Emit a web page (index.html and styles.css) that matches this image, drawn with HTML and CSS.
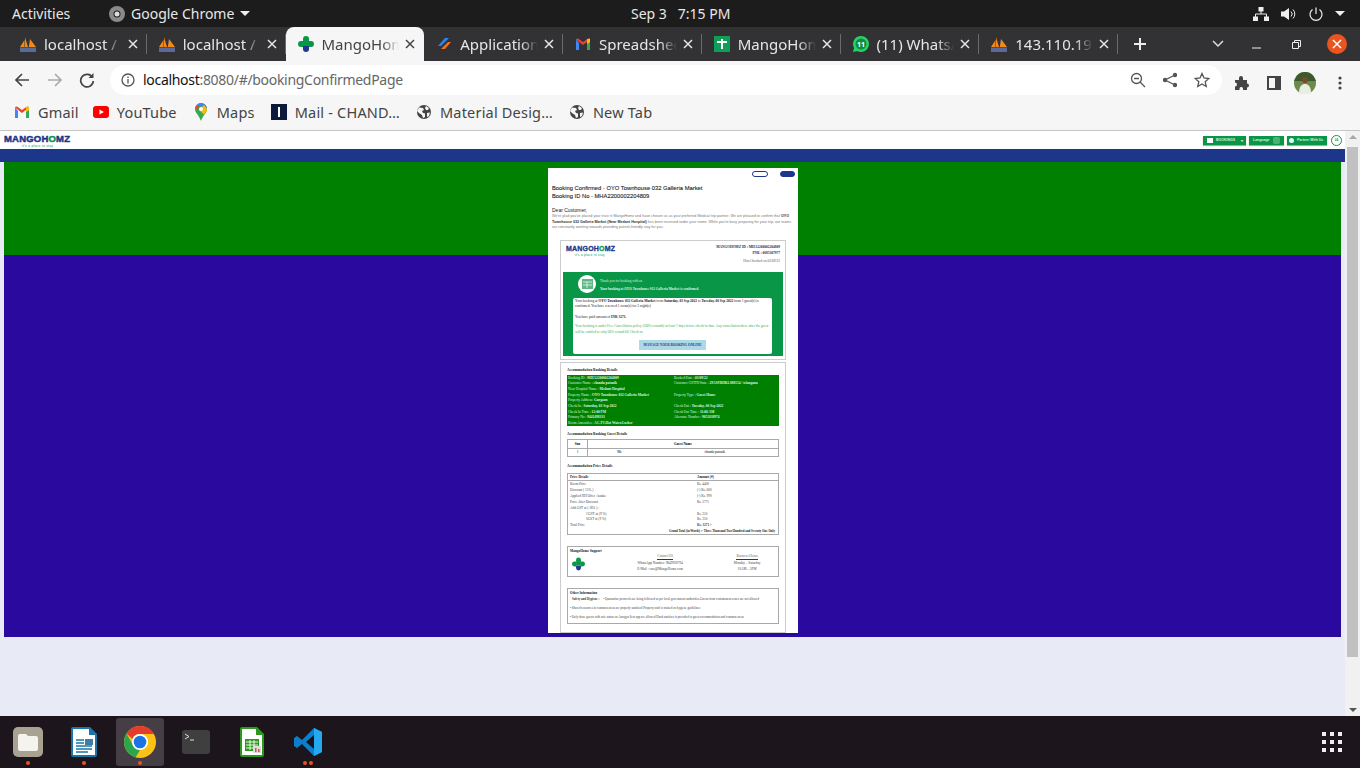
FILE: index.html
```html
<html>
  <head>
    <meta charset="utf-8" />
    <title>MangoHomz</title>
    <link rel="stylesheet" href="styles.css">
  </head>
  <body>
    <svg class="defs" width="0" height="0">
      <symbol id="pma" viewBox="0 0 16 16">
        <path d="M0 11 4.500 4v7zM5 11V1l3 10zM8.800 11 10 3l6 8z" fill="#f08a1d"/>
        <path d="M0 11.500h16V16H0z" fill="#5a6a9a"/>
      </symbol>
      <symbol id="plus" viewBox="0 0 16 16">
        <path d="M5 5V3a3 3 0 0 1 6 0v2z" fill="#0a9647"/>
        <path d="M5 5H3a3 3 0 0 0 0 6h2zM11 5h2a3 3 0 0 1 0 6h-2z" fill="#0a9647"/>
        <path d="M5 4.500h6V10H5z" fill="#0a9647"/>
        <path d="M5 10h6v3a3 3 0 0 1-6 0z" fill="#1e3a8a"/>
      </symbol>
      <symbol id="gmail" viewBox="0 0 16 16">
        <path d="M1 3.500V14h3V7z" fill="#4285f4"/>
        <path d="M15 3.500V14h-3V7z" fill="#34a853"/>
        <path d="M1 3.500 8 9l7-5.500V3l-2-.500L8 6 3 2.500 1 3z" fill="#ea4335"/>
        <path d="M12 3.300 15 2.500V6l-3 2.300z" fill="#fbbc04"/>
      </symbol>
      <symbol id="globe" viewBox="0 0 16 16">
        <circle cx="8" cy="8" r="7" fill="#444"/>
        <path d="M3 3.500 7 4l1 2-2 1 1 2 2 .500V13l-2 1-1-3-3-2-2-2zM10 2l3 2-1 2h-2l-1-2zM11 9l3-.500-1 3.500-2 1z" fill="#f6f6f6"/>
      </symbol>
      <symbol id="close" viewBox="0 0 10 10">
        <path d="M1 1l8 8M9 1 1 9" stroke="currentColor" stroke-width="1.500" fill="none"/>
      </symbol>
    </svg>

    <div class="topbar">
      <span class="activities">Activities</span>
      <span class="app-menu">
        <svg class="chrome-mono" width="16" height="16" viewBox="0 0 16 16"><circle cx="8" cy="8" r="8" fill="#8a8a8a"/><circle cx="8" cy="8" r="3.500" fill="#1b1b1b"/><circle cx="8" cy="8" r="2.500" fill="#ddd"/></svg>
        Google Chrome
        <i class="caret"></i>
      </span>
      <span class="clock">Sep 3 &nbsp; 7:15 PM</span>
      <span class="tray">
        <svg width="16" height="14" viewBox="0 0 16 14" fill="#eee"><path d="M5.500 0h5v4.500h-5zM0 9.500h5V14H0zM11 9.500h5V14h-5z"/><path d="M8 4v3M2.500 10V7h11v3" stroke="#eee" fill="none"/></svg>
        <svg width="16" height="14" viewBox="0 0 16 14" fill="#eee"><path d="M0 4.500h3L8 1v12L3 9.500H0z"/><path d="M10 4.500a3.500 3.500 0 0 1 0 5M12 2.500a6.500 6.500 0 0 1 0 9" stroke="#eee" fill="none"/></svg>
        <svg width="14" height="14" viewBox="0 0 14 14" fill="none" stroke="#eee" stroke-width="1.200"><path d="M7 .5v6.500M3.500 2.500a6 6 0 1 0 7 0"/></svg>
        <i class="caret"></i>
      </span>
    </div>

    <div class="tabstrip">
      <div class="tab"><svg class="fav"><use href="#pma"/></svg><span class="tab-title">localhost / 127.0.0.1</span><svg class="tab-x"><use href="#close"/></svg></div>
      <div class="tab"><svg class="fav"><use href="#pma"/></svg><span class="tab-title">localhost / 127.0.0.1</span><svg class="tab-x"><use href="#close"/></svg></div>
      <div class="tab tab-active"><svg class="fav"><use href="#plus"/></svg><span class="tab-title">MangoHomz</span><svg class="tab-x"><use href="#close"/></svg></div>
      <div class="tab"><svg class="fav" viewBox="0 0 16 16"><path d="M9 2h4L5 10H2z" fill="#2684ff"/><path d="M12 6h3l-6 7H5z" fill="#f2711c"/></svg><span class="tab-title">Application Form</span><svg class="tab-x"><use href="#close"/></svg></div>
      <div class="tab"><svg class="fav"><use href="#gmail"/></svg><span class="tab-title">Spreadsheet</span><svg class="tab-x"><use href="#close"/></svg></div>
      <div class="tab"><svg class="fav" viewBox="0 0 16 16"><path d="M0 0h16v16H0z" fill="#0f9d58"/><path d="M3 6h10M8 3v10" stroke="#fff" stroke-width="2"/></svg><span class="tab-title">MangoHomz</span><svg class="tab-x"><use href="#close"/></svg></div>
      <div class="tab"><svg class="fav" viewBox="0 0 16 16"><path d="M8 0a8 8 0 0 1 0 16 8 8 0 0 1-3.800-1L0 16l1.100-4A8 8 0 0 1 8 0z" fill="#25d366"/><circle cx="8" cy="8" r="5.500" fill="#128c3e"/><text x="8" y="10.500" class="fav-count">11</text></svg><span class="tab-title">(11) WhatsApp</span><svg class="tab-x"><use href="#close"/></svg></div>
      <div class="tab tab-last"><svg class="fav"><use href="#pma"/></svg><span class="tab-title">143.110.190.11</span><svg class="tab-x"><use href="#close"/></svg></div>
      <svg class="new-tab" width="14" height="14" viewBox="0 0 14 14"><path d="M7 1v12M1 7h12" stroke="#eee" stroke-width="2"/></svg>
      <span class="win-controls">
        <svg width="12" height="8" viewBox="0 0 12 8" fill="none" stroke="#ddd" stroke-width="1.500"><path d="M1 1l5 5 5-5"/></svg>
        <svg class="win-min" width="9" height="9" viewBox="0 0 9 9"><path d="M0 8h9" stroke="#eee"/></svg>
        <svg class="win-max" width="9" height="9" viewBox="0 0 9 9" fill="none" stroke="#eee"><path d="M.5 2.500h6v6h-6zM2.500 2.500v-2h6v6h-2"/></svg>
        <span class="win-close"><svg width="10" height="10" color="#fff"><use href="#close"/></svg></span>
      </span>
    </div>

    <div class="toolbar">
      <svg class="nav-icon" width="16" height="16" viewBox="0 0 16 16" fill="none" stroke="#444" stroke-width="1.700"><path d="M15 8H2M8 2 2 8l6 6"/></svg>
      <svg class="nav-icon" width="16" height="16" viewBox="0 0 16 16" fill="none" stroke="#aaa" stroke-width="1.700"><path d="M1 8h13M8 2l6 6-6 6"/></svg>
      <svg class="nav-icon nav-reload" width="16" height="16" viewBox="0 0 16 16" fill="none" stroke="#444" stroke-width="1.700"><path d="M13.500 5.500A6.300 6.300 0 1 0 14.300 9"/><path d="M14.500 1v5h-5" fill="#444" stroke="none"/></svg>
      <div class="omnibox">
        <svg width="14" height="14" viewBox="0 0 14 14" fill="none" stroke="#555" stroke-width="1.300"><circle cx="7" cy="7" r="6"/><path d="M7 6v4.500M7 3.500v1.500"/></svg>
        <span class="url"><b>localhost</b>:8080/#/bookingConfirmedPage</span>
        <span class="omni-right">
          <svg width="16" height="16" viewBox="0 0 16 16" fill="none" stroke="#555" stroke-width="1.300"><circle cx="6.500" cy="6.500" r="5"/><path d="M4 6.500h5M10 10l5 5"/></svg>
          <svg width="16" height="16" viewBox="0 0 16 16" fill="#555"><circle cx="13" cy="3" r="2.200"/><circle cx="3" cy="8" r="2.200"/><circle cx="13" cy="13" r="2.200"/><path d="M13 3 3 8l10 5" fill="none" stroke="#555" stroke-width="1.300"/></svg>
          <svg width="16" height="16" viewBox="0 0 16 16" fill="none" stroke="#555" stroke-width="1.300"><path d="M8 1.500l2 4.500 4.800.5-3.600 3.200 1 4.800L8 12l-4.200 2.500 1-4.800L1.200 6.500 6 6z"/></svg>
        </span>
      </div>
      <span class="tool-right">
        <svg width="16" height="16" viewBox="0 0 16 16" fill="#444"><path d="M1 5h4V3a2 2 0 0 1 4 0v2h4v3.500a2 2 0 0 1 0 4V15H9v-1.500a1.800 1.800 0 0 0-3.500 0V15H1v-3.500a2 2 0 0 0 0-4z"/></svg>
        <svg class="tool-panel" width="14" height="14" viewBox="0 0 14 14"><path d="M0 0h14v14H0z" fill="#444"/><path d="M2 2h6v10H2z" fill="#f6f6f6"/></svg>
        <svg class="avatar" width="22" height="22" viewBox="0 0 22 22"><circle cx="11" cy="11" r="11" fill="#6d8a4a"/><path d="M3 3.500a11 11 0 0 1 16 0L22 9H0z" fill="#3d5a2e"/><circle cx="11" cy="8" r="3" fill="#7a4a2e"/><path d="M5 21c0-7 3-9 6-9s6 2 6 9a11 11 0 0 1-12 0z" fill="#e8eee0"/></svg>
        <svg class="tool-menu" width="4" height="14" viewBox="0 0 4 14" fill="#444"><circle cx="2" cy="2" r="1.600"/><circle cx="2" cy="7" r="1.600"/><circle cx="2" cy="12" r="1.600"/></svg>
      </span>
    </div>

    <div class="bookmarks">
      <span class="bm"><svg width="16" height="16"><use href="#gmail"/></svg>Gmail</span>
      <span class="bm"><svg width="16" height="16" viewBox="0 0 16 16"><rect y="2" width="16" height="12" rx="3" fill="#f00"/><path d="M6.500 5.500v5L11 8z" fill="#fff"/></svg>YouTube</span>
      <span class="bm"><svg width="16" height="18" viewBox="0 0 16 18"><path d="M8 0a6 6 0 0 1 6 6c0 4-4 6-6 12C6 12 2 10 2 6a6 6 0 0 1 6-6z" fill="#34a853"/><path d="M8 0a6 6 0 0 1 6 6L4 2a6 6 0 0 1 4-2z" fill="#4285f4"/><path d="M14 6c0 2-1.500 3.500-3 5.500L6 7l5-5z" fill="#fbbc04"/><path d="M2 6a6 6 0 0 1 2-4l3 3z" fill="#ea4335"/><circle cx="8" cy="6" r="2" fill="#fff"/></svg>Maps</span>
      <span class="bm"><svg width="16" height="16" viewBox="0 0 16 16"><path d="M0 0h16v16H0z" fill="#0b1a3a"/><path d="M7 3h2v10H7z" fill="#fff"/></svg>Mail - CHAND…</span>
      <span class="bm"><svg width="16" height="16"><use href="#globe"/></svg>Material Desig…</span>
      <span class="bm"><svg width="16" height="16"><use href="#globe"/></svg>New Tab</span>
    </div>

    <div class="viewport">
      <div class="page">
        <div class="site-header">
          <div class="site-logo">
            <span class="brand">MANGOH<em>O</em>MZ</span>
            <span class="brand-tag">it's a place to stay</span>
          </div>
          <div class="site-actions">
            <span class="site-btn site-btn-book"><i class="dot-house"></i>BOOKINGS <small>▾</small></span>
            <span class="site-btn site-btn-lang">Language <i class="leaf"></i></span>
            <span class="site-btn site-btn-partner"><i class="dot-round"></i>Partner With Us</span>
            <span class="ring">24</span>
          </div>
        </div>
        <div class="blue-band"></div>
        <div class="stage">
          <div class="card">
            <div class="card-btns"><span class="pill"></span><span class="pill pill-solid"></span></div>
            <h3 class="card-title">Booking Confirmed - OYO Townhouse 032 Galleria Market</h3>
            <h3 class="card-title">Booking ID No - MHA2200002204809</h3>
            <p class="dear">Dear Customer,</p>
            <p class="intro">We're glad you've placed your trust in MangoHomz and have chosen us as your preferred Medical trip partner. We are pleased to confirm that <b>OYO Townhouse 032 Galleria Market (Near Medant Hospital)</b> has been reserved under your name. While you're busy preparing for your trip, our teams are constantly working towards providing patient-friendly stay for you.</p>

            <div class="box box-confirm">
              <div class="box-head">
                <div class="inner-logo">
                  <span class="brand brand-lg">MANGOH<em>O</em>MZ</span>
                  <span class="brand-tag brand-tag-lg">it's a place to stay</span>
                </div>
                <div class="ids">
                  <b>MANGOHOMZ ID : MHA2200002204809</b>
                  <b>PNR : 0685307977</b>
                  <span>Hotel booked on 03/09/22</span>
                </div>
              </div>
              <div class="confirm-green">
                <div class="thanks">
                  <span class="thanks-circle">
                    <svg width="11" height="10" viewBox="0 0 11 10"><path d="M0 0h11v10H0z" fill="#5cb885"/><path d="M1 3h9M1 6h9M5 3v6" stroke="#fff" stroke-width=".7"/></svg>
                  </span>
                  <div class="thanks-text">
                    <p>Thank you for booking with us.</p>
                    <p><b>Your booking at OYO Townhouse 032 Galleria Market is confirmed.</b></p>
                  </div>
                </div>
                <div class="confirm-white">
                  <p>Your booking at <b>OYO Townhouse 032 Galleria Market</b> from <b>Saturday, 03 Sep 2022</b> to <b>Tuesday, 06 Sep 2022</b> from 1 guest(s) is confirmed. You have reserved 1 room(s) for 3 night(s)</p>
                  <p class="paid">You have paid amount of <b>INR 3271.</b></p>
                  <p class="policy">Your booking is under Free Cancellation policy (100% refunds) at least 7 days before check-in date. Any cancellation there after the guest will be entitled to only 60% refund till Check-in.</p>
                  <a class="manage">MANAGE YOUR BOOKING ONLINE</a>
                </div>
              </div>
            </div>

            <div class="box box-details">
              <p class="sec-title sec-first">Accommodation Booking Details</p>
              <div class="detail-green">
                <span>Booking ID : <b>MHA2200002204809</b></span><span>Booked Date : <b>03/09/22</b></span>
                <span>Customer Name : <b>chandu patnaik</b></span><span>Customer GSTIN/State : <b>29ASFDHKL888554 / telangana</b></span>
                <span class="wide">Near Hospital Name : <b>Medant Hospital</b></span>
                <span>Property Name : <b>OYO Townhouse 032 Galleria Market</b></span><span>Property Type : <b>Guest House</b></span>
                <span class="wide">Property Address: <b>Gurgaon</b></span>
                <span>Check In : <b>Saturday, 03 Sep 2022</b></span><span>Check Out : <b>Tuesday, 06 Sep 2022</b></span>
                <span>Check In Time : <b>12:00 PM</b></span><span>Check Out Time : <b>11:00 AM</b></span>
                <span>Primary No : <b>9441498333</b></span><span>Alternate Number : <b>9052638974</b></span>
                <span class="wide">Room Amenities : <b>AC,TV,Hot Water,Locker</b></span>
              </div>

              <p class="sec-title sec-guest">Accommodation Booking Guest Details</p>
              <table class="guest-table">
                <colgroup><col class="col-sno"><col class="col-mr"><col></colgroup>
                <tr><th>Sno</th><th colspan="2">Guest Name</th></tr>
                <tr><td>1</td><td class="cell-mr">Mr.</td><td class="cell-name">chandu patnaik</td></tr>
              </table>

              <p class="sec-title sec-price">Accommodation Price Details</p>
              <div class="price-table">
                <div class="price-head"><b>Price Details</b><b>Amount (₹)</b></div>
                <div class="price-row"><span>Room Price</span><span>Rs. 4400</span></div>
                <div class="price-row"><span>Discount ( 15% )</span><span>(-) Rs. 660</span></div>
                <div class="price-row"><span>Applied HH Offer : kanka</span><span>(-) Rs. 990</span></div>
                <div class="price-row"><span>Price After Discount</span><span>Rs. 2771</span></div>
                <div class="price-row"><span>Add GST at ( 18% ) :</span><span></span></div>
                <div class="price-row"><span class="tax">CGST at (9 %)</span><span>Rs. 250</span></div>
                <div class="price-row"><span class="tax">SGST at (9 %)</span><span>Rs. 250</span></div>
                <div class="price-row"><span>Total Price</span><b>Rs. 3271 /-</b></div>
                <div class="grand"><b>Grand Total (in Words) :- Three Thousand Two Hundred and Seventy One Only</b></div>
              </div>

              <div class="inner-box support">
                <b class="support-title">MangoHomz Support</b>
                <div class="support-row">
                  <svg class="support-icon" width="13" height="14"><use href="#plus"/></svg>
                  <div class="support-col support-contact">
                    <u>Contact US</u>
                    <span>WhatsApp Number: 9849938794</span>
                    <span>E-Mail : care@MangoHomz.com</span>
                  </div>
                  <div class="support-col support-hours">
                    <u>Business Hours</u>
                    <span>Monday – Saturday</span>
                    <span>10AM – 5PM</span>
                  </div>
                </div>
              </div>

              <div class="inner-box other">
                <b class="support-title">Other Information</b>
                <p><b class="safety">Safety and Hygiene :</b> • Quarantine protocols are being followed as per local government authorities.Guests from containment zones are not allowed</p>
                <p>• Shared resources in common areas are properly sanitized Property staff is trained on hygiene guidelines</p>
                <p>• Only those guests with safe status on Aarogya Setu app are allowed Hand sanitizer is provided in guest accommodation and common areas</p>
              </div>
            </div>
          </div>
        </div>
      </div>
      <div class="scrollbar">
        <i class="sb-up"></i>
        <div class="sb-track"><div class="sb-thumb"></div></div>
        <i class="sb-down"></i>
      </div>
    </div>

    <div class="dock">
      <span class="dock-item">
        <svg width="30" height="30" viewBox="0 0 30 30"><rect width="30" height="30" rx="5" fill="#a8a292"/><path d="M5 9a2 2 0 0 1 2-2h6l2 2h8a2 2 0 0 1 2 2v11a2 2 0 0 1-2 2H7a2 2 0 0 1-2-2z" fill="#f5f3ee"/></svg>
        <i class="run-dots"><i></i></i>
      </span>
      <span class="dock-item">
        <svg width="26" height="30" viewBox="0 0 26 30"><path d="M2 0h17l7 7v21a2 2 0 0 1-2 2H2a2 2 0 0 1-2-2V2a2 2 0 0 1 2-2z" fill="#1b75a8"/><path d="M2 2h16v6h6v20H2z" fill="#fff"/><path d="M5 13h8M5 16h8M5 19h16M5 22h16M5 25h12" stroke="#1b75a8" stroke-width="1.300"/><path d="M14 12h8v6h-8z" fill="#3f7e9f"/></svg>
        <i class="run-dots"><i></i></i>
      </span>
      <span class="dock-item dock-active">
        <svg width="32" height="32" viewBox="0 0 32 32">
          <circle cx="16" cy="16" r="16" fill="#fbc116"/>
          <path d="M16 0a16 16 0 0 1 13.900 8H16a8 8 0 0 0-7.500 5L2.500 7.500A16 16 0 0 1 16 0z" fill="#e33b2e"/>
          <path d="M2.500 7.500 9.500 20a8 8 0 0 0 6.500 4l-4.500 7.400A16 16 0 0 1 2.500 7.500z" fill="#2ea44f"/>
          <circle cx="16" cy="16" r="8" fill="#fff"/><circle cx="16" cy="16" r="6.300" fill="#1a73e8"/>
        </svg>
        <i class="run-dots"><i></i></i>
      </span>
      <span class="dock-item">
        <svg width="28" height="24" viewBox="0 0 28 24"><rect width="28" height="24" rx="3" fill="#3f3f3f"/><path d="M3 4l4 2.500L3 9" fill="none" stroke="#ddd"/><path d="M8 10h4" stroke="#ddd"/></svg>
      </span>
      <span class="dock-item">
        <svg width="24" height="30" viewBox="0 0 24 30"><path d="M2 0h15l7 7v21a2 2 0 0 1-2 2H2a2 2 0 0 1-2-2V2a2 2 0 0 1 2-2z" fill="#2b9a1c"/><path d="M2 2h14v6h6v20H2z" fill="#fff"/><path d="M5 12h14v12H5z" fill="#2b9a1c"/><path d="M6 15h12M6 18h12M6 21h12M10 13v10M14 13v10" stroke="#fff" stroke-width=".9"/><path d="M13 19h8v7h-8z" fill="#ddd"/><path d="M15 21h1.500v4H15zM18 22h1.500v3H18z" fill="#c55"/></svg>
        <i class="run-dots"></i>
      </span>
      <span class="dock-item">
        <svg width="28" height="28" viewBox="0 0 28 28"><path d="M20 0l8 4v20l-8 4L8 16l-5 4-3-2v-8l3-2 5 4z" fill="#0b7fcc"/><path d="M20 0l8 4v20l-8 4z" fill="#23a9f2"/><path d="M20 7v14l-8-7z" fill="#1a1419"/></svg>
        <i class="run-dots"><i></i><i></i></i>
      </span>
      <svg class="app-grid" width="20" height="20" viewBox="0 0 20 20" fill="#eee"><path d="M0 0h4v4H0zM8 0h4v4H8zM16 0h4v4h-4zM0 8h4v4H0zM8 8h4v4H8zM16 8h4v4h-4zM0 16h4v4H0zM8 16h4v4H8zM16 16h4v4h-4z"/></svg>
    </div>
  </body>
</html>
```

FILE: styles.css
```css
* {
  box-sizing: border-box;
  margin: 0;
  padding: 0;
}

html,
body {
  width: 1360px;
  height: 768px;
  overflow: hidden;
}

body {
  display: flex;
  flex-direction: column;
  font-family: 'Noto Sans', sans-serif;
}

.defs {
  position: absolute;
}

/* desktop top bar */
.topbar {
  height: 27px;
  flex: none;
  background: #1c1c1c;
  color: #e8e8e8;
  font-size: 14px;
  display: flex;
  align-items: center;
  padding-left: 12px;
  position: relative;
}

.activities {
  width: 97px;
}

.app-menu {
  display: flex;
  align-items: center;
  gap: 6px;
}

.caret {
  display: inline-block;
  border: 5px solid transparent;
  border-top: 5px solid #eee;
  border-bottom: 0;
}

.clock {
  position: absolute;
  left: 631px;
  top: 4px;
}

.tray {
  margin-left: auto;
  padding-right: 15px;
  display: flex;
  align-items: center;
  gap: 12px;
}

/* chrome tabs */
.tabstrip {
  height: 34px;
  flex: none;
  background: #323234;
  display: flex;
  padding-left: 8px;
  align-items: flex-end;
}

.tab {
  width: 138.750px;
  height: 34px;
  display: flex;
  align-items: center;
  padding: 0 9px 0 12px;
  color: #e6e6e6;
  font-size: 15px;
  position: relative;
}

.tab::after {
  content: '';
  position: absolute;
  right: 0;
  top: 7px;
  height: 20px;
  border-right: 1px solid #6a6a6c;
}

.tab-active {
  background: #f6f6f6;
  color: #444;
  border-radius: 8px 8px 0 0;
}

.tab-active::after {
  display: none;
}

.fav {
  width: 16px;
  height: 16px;
  flex: none;
  margin-right: 8px;
}

.fav-count {
  font-size: 7px;
  font-weight: bold;
  fill: #fff;
  text-anchor: middle;
}

.tab-title {
  flex: 1;
  overflow: hidden;
  white-space: nowrap;
  -webkit-mask-image: linear-gradient(to right, #000 78%, transparent);
  mask-image: linear-gradient(to right, #000 78%, transparent);
}

.tab-x {
  width: 10px;
  height: 10px;
  flex: none;
  margin-left: 6px;
  color: #e6e6e6;
}

.tab-active .tab-x {
  color: #444;
}

.new-tab {
  margin: 0 0 10px 15px;
}

.win-controls {
  margin-left: auto;
  display: flex;
  align-items: center;
  height: 34px;
  padding-right: 13px;
}

.win-min {
  margin-left: 28px;
}

.win-max {
  margin-left: 31px;
}

.win-close {
  width: 20px;
  height: 20px;
  margin-left: 26px;
  border-radius: 50%;
  background: #e95420;
  display: flex;
  align-items: center;
  justify-content: center;
}

/* chrome toolbar */
.toolbar {
  height: 34px;
  flex: none;
  background: #f6f6f6;
  display: flex;
  align-items: flex-start;
  padding: 4px 0 0 14px;
}

.nav-icon {
  margin: 7px 17px 0 0;
}

.nav-reload {
  margin-left: -1px;
}

.omnibox {
  width: 1112px;
  height: 30px;
  margin-left: -2px;
  background: #fff;
  border-radius: 15px;
  display: flex;
  align-items: center;
  padding: 0 12px 0 11px;
  font-size: 14px;
  letter-spacing: -0.3px;
  color: #666;
}

.url {
  margin: -2px 0 0 8px;
}

.url b {
  font-weight: normal;
  color: #111;
}

.omni-right {
  margin-left: auto;
  display: flex;
  gap: 16px;
}

.tool-right {
  margin-left: 12px;
  padding-top: 7px;
  display: flex;
  align-items: center;
}

.tool-panel {
  margin-left: 17px;
}

.avatar {
  margin-left: 13px;
}

.tool-menu {
  margin-left: 22px;
}

/* bookmarks */
.bookmarks {
  height: 36px;
  flex: none;
  background: #f6f6f6;
  border-bottom: 1px solid #c6c6c6;
  display: flex;
  align-items: center;
  padding: 0 0 1px 14px;
  gap: 16px;
  font-size: 14.500px;
  letter-spacing: .2px;
  color: #444;
}

.bm {
  display: flex;
  align-items: center;
  gap: 8px;
  white-space: nowrap;
}

.bm:first-child {
  margin-right: -2px;
}

/* page */
.viewport {
  height: 585px;
  flex: none;
  display: flex;
}

.page {
  flex: 1;
  background: #e8eaf6;
  overflow: hidden;
}

.site-header {
  height: 18px;
  background: #fff;
  display: flex;
  justify-content: space-between;
  padding: 3px 3px 0 4px;
}

.site-logo {
  width: 68px;
  overflow: hidden;
  height: 14px;
  line-height: 1;
}

.brand {
  display: block;
  font: 900 9.500px/10px 'Liberation Sans', sans-serif;
  letter-spacing: .2px;
  color: #1c3689;
  -webkit-text-stroke: .5px #1c3689;
  white-space: nowrap;
}

.brand em {
  font-style: normal;
  color: #0a9647;
  -webkit-text-stroke-color: #0a9647;
}

.brand-tag {
  display: block;
  padding-left: 18px;
  font: 3.200px/4px 'Liberation Sans', sans-serif;
  letter-spacing: .3px;
  color: #0a9647;
  white-space: nowrap;
}

.site-actions {
  display: flex;
  align-items: flex-start;
  gap: 3px;
}

.site-btn {
  height: 9px;
  margin-top: 2px;
  background: #0a9647;
  color: #d8f0df;
  font: bold 3.500px/9px 'Liberation Sans', sans-serif;
  display: flex;
  align-items: center;
  white-space: nowrap;
  box-shadow: 0 1px 1px #aaa;
}

.site-btn-book {
  width: 43px;
  padding-left: 4px;
  gap: 3px;
}

.site-btn small {
  font-size: 4px;
  margin-left: 3px;
}

.site-btn-lang {
  width: 35px;
  padding-left: 4px;
  gap: 3px;
}

.site-btn-partner {
  width: 40px;
  padding-left: 2px;
  gap: 3px;
}

.dot-house {
  width: 6px;
  height: 5px;
  background: #fff;
}

.leaf {
  width: 7px;
  height: 7px;
  background: #4bb277;
  border-radius: 2px;
}

.dot-round {
  width: 5px;
  height: 5px;
  border-radius: 50%;
  background: #dff;
}

.ring {
  width: 11px;
  height: 11px;
  margin: 1px 0 0 1px;
  border: 1px solid #0a9647;
  border-radius: 50%;
  font: bold 3px/9px 'Liberation Sans', sans-serif;
  text-align: center;
  color: #0a9647;
}

.blue-band {
  height: 13px;
  background: #1c3689;
}

.stage {
  margin: 0 4px;
  height: 475px;
  padding-top: 6px;
  background: linear-gradient(#008000 93px, #2a0a9e 93px);
}

/* booking card */
.card {
  width: 250px;
  height: 465px;
  margin-left: 544px;
  background: #fff;
  padding: 3px 4px 0;
  font-family: 'Liberation Serif', serif;
  color: #333;
  overflow: hidden;
}

.card-btns {
  display: flex;
  justify-content: flex-end;
  gap: 12px;
  height: 13px;
}

.pill {
  width: 16px;
  height: 6px;
  border: 1px solid #1c3689;
  border-radius: 3px;
}

.pill-solid {
  width: 15px;
  margin-right: -1px;
  background: #1c3689;
}

.card-title {
  font: normal 5.800px/8px 'Liberation Sans', sans-serif;
  color: #222;
  -webkit-text-stroke: .1px #222;
  white-space: nowrap;
}

.dear {
  font: 5px/8px 'Liberation Sans', sans-serif;
  color: #222;
  margin-top: 6px;
}

.intro {
  font: 3.650px/5.500px 'Liberation Sans', sans-serif;
  color: #777;
  height: 21px;
}

.intro b {
  color: #333;
}

.box {
  width: 226px;
  margin-left: 8px;
  border: 1px solid #ccc;
}

.box-confirm {
  height: 120px;
  margin-top: 5px;
  padding: 2px;
}

.box-head {
  height: 29px;
  display: flex;
  justify-content: space-between;
  padding: 2px 3px 0 2px;
}

.brand-lg {
  font-size: 7px;
  line-height: 8px;
  -webkit-text-stroke-width: .3px;
}

.brand-tag-lg {
  font-size: 3px;
  line-height: 4px;
  padding-left: 9px;
}

.inner-logo {
  padding-left: 1px;
  width: 50px;
}

.ids {
  display: flex;
  flex-direction: column;
  align-items: flex-end;
  font-size: 3.500px;
  line-height: 5.500px;
  color: #1a2a55;
}

.ids span {
  color: #555;
  margin-top: 3px;
}

.confirm-green {
  height: 84px;
  background: #0a9647;
  padding: 3px 11px 0 10px;
  color: #d9f5e2;
  font-size: 3.400px;
}

.thanks {
  height: 23px;
  display: flex;
  padding-left: 5px;
}

.thanks-circle {
  width: 18px;
  height: 18px;
  border-radius: 50%;
  background: #fff;
  display: flex;
  align-items: center;
  justify-content: center;
}

.thanks-text {
  margin-left: 4px;
  padding-top: 2px;
  line-height: 8px;
}

.confirm-white {
  height: 56px;
  background: #fff;
  border-radius: 2px;
  padding: 1px 2px;
  color: #222;
  line-height: 5.400px;
  font-size: 3.500px;
  text-align: left;
}

.paid {
  margin-top: 5px;
}

.policy {
  margin-top: 4px;
  color: #3bad4b;
}

.manage {
  display: block;
  width: 67px;
  height: 10px;
  margin: 5px auto 0 64px;
  background: #add8e6;
  color: #1c3689;
  font-weight: bold;
  text-align: center;
  line-height: 10px;
  font-size: 3.400px;
}

.box-details {
  height: 271px;
  margin-top: 2px;
  padding: 4px 6px 0;
}

.sec-title {
  font-size: 3.600px;
  font-weight: bold;
  line-height: 6px;
  height: 7px;
  color: #222;
}

.sec-first {
  height: 8px;
}

.detail-green {
  height: 51px;
  background: #008000;
  color: #d9f5e2;
  padding: .6px 1px 0;
  font-size: 3.500px;
  line-height: 5.660px;
  display: grid;
  grid-template-columns: 106px 1fr;
  align-content: start;
  white-space: nowrap;
}

.detail-green .wide {
  grid-column: 1 / 3;
}

.sec-guest {
  margin-top: 5px;
}

.guest-table {
  width: 212px;
  margin-top: 1px;
  border: 1px solid #aaa;
  border-collapse: collapse;
  font-size: 3.400px;
  table-layout: fixed;
}

.guest-table th,
.guest-table td {
  border: 1px solid #aaa;
  height: 8.500px;
  text-align: center;
}

.guest-table .cell-mr {
  border-right: 0;
}

.guest-table .cell-name {
  border-left: 0;
}

.col-sno {
  width: 20px;
}

.col-mr {
  width: 64px;
}

.sec-price {
  margin-top: 6px;
}

.price-table {
  width: 212px;
  height: 62px;
  margin-top: 3px;
  border: 1px solid #aaa;
  font-size: 3.400px;
  line-height: 5.900px;
  color: #444;
}

.price-head {
  display: grid;
  grid-template-columns: 127px 1fr;
  padding-left: 2px;
  height: 7px;
  line-height: 6px;
  border-bottom: 1px solid #aaa;
  color: #222;
  margin-bottom: 1px;
}

.price-row {
  display: grid;
  grid-template-columns: 127px 1fr;
  padding-left: 2px;
}

.tax {
  padding-left: 16px;
}

.grand {
  text-align: right;
  padding-right: 3px;
  color: #222;
  white-space: nowrap;
  font-size: 3.100px;
}

.inner-box {
  width: 212px;
  border: 1px solid #aaa;
  font-size: 3.400px;
  color: #444;
}

.support {
  height: 31px;
  margin-top: 11px;
  padding: 2px;
}

.support-title {
  display: block;
  color: #222;
  line-height: 5px;
}

.support-row {
  display: flex;
  align-items: flex-start;
}

.support-icon {
  margin: 3px 0 0 2px;
  flex: none;
}

.support-col {
  display: flex;
  flex-direction: column;
  align-items: center;
  line-height: 6px;
  white-space: nowrap;
}

.support-col u {
  color: #666;
  text-decoration: none;
  border-bottom: 1px solid #1c3689;
  height: 6px;
  line-height: 5px;
}

.support-contact {
  margin-left: 39px;
  width: 72px;
}

.support-contact u {
  margin-left: 10px;
}

.support-hours {
  margin-left: 31px;
  width: 40px;
}

.other {
  height: 36px;
  margin-top: 11px;
  padding: 2px;
  line-height: 6px;
}

.other p {
  white-space: nowrap;
  padding-top: 2px;
  line-height: 7px;
  font-size: 3.100px;
}

.other .support-title + p {
  padding-top: 0;
}

.safety {
  color: #333;
  margin: 0 3px 0 2px;
}

/* scrollbar */
.scrollbar {
  width: 15px;
  flex: none;
  background: #f1f1f1;
  display: flex;
  flex-direction: column;
  align-items: center;
}

.sb-up,
.sb-down {
  flex: none;
  border: 4px solid transparent;
  margin: 4px 0;
}

.sb-up {
  border-bottom: 4px solid #a8a8a8;
  border-top: 0;
}

.sb-down {
  border-top: 4px solid #555;
  border-bottom: 0;
}

.sb-track {
  flex: 1;
  width: 100%;
  padding: 0 2px 0 2px;
  margin-top: 4px;
}

.sb-thumb {
  height: 510px;
  background: #c1c1c1;
}

/* ubuntu dock */
.dock {
  flex: 1;
  background: #1d151c;
  display: flex;
  align-items: center;
  padding: 0 18px 0 0;
  position: relative;
}

.dock-item {
  width: 48px;
  height: 48px;
  margin: 0 4px;
  border-radius: 3px;
  display: flex;
  align-items: center;
  justify-content: center;
  position: relative;
  flex: none;
}

.dock-active {
  background: #453e44;
}

.run-dots {
  position: absolute;
  bottom: 1px;
  left: 0;
  right: 0;
  display: flex;
  justify-content: center;
  gap: 2px;
}

.run-dots i {
  width: 4px;
  height: 4px;
  border-radius: 50%;
  background: #e95420;
}

.app-grid {
  margin-left: auto;
}
```
